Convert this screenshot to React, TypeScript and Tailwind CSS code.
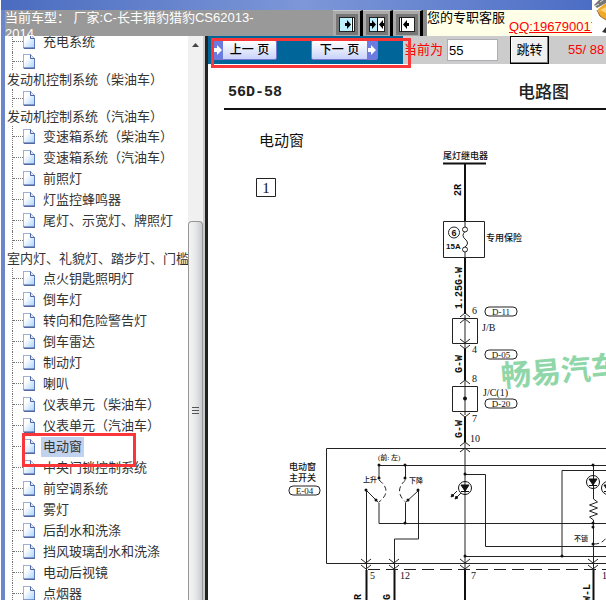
import React from "react";
import { clsx } from "clsx";

type Entry = { label?: string; wrapped?: string; selected?: boolean };

const ENTRIES: Entry[] = [
  { label: "充电系统" },
  { wrapped: "发动机控制系统（柴油车）" },
  { wrapped: "发动机控制系统（汽油车）" },
  { label: "变速箱系统（柴油车）" },
  { label: "变速箱系统（汽油车）" },
  { label: "前照灯" },
  { label: "灯监控蜂鸣器" },
  { label: "尾灯、示宽灯、牌照灯" },
  { wrapped: "室内灯、礼貌灯、踏步灯、门槛灯" },
  { label: "点火钥匙照明灯" },
  { label: "倒车灯" },
  { label: "转向和危险警告灯" },
  { label: "倒车雷达" },
  { label: "制动灯" },
  { label: "喇叭" },
  { label: "仪表单元（柴油车）" },
  { label: "仪表单元（汽油车）" },
  { label: "电动窗", selected: true },
  { label: "中央门锁控制系统" },
  { label: "前空调系统" },
  { label: "雾灯" },
  { label: "后刮水和洗涤" },
  { label: "挡风玻璃刮水和洗涤" },
  { label: "电动后视镜" },
  { label: "点烟器" },
];

/* --------------------------------------------------------------- Sidebar */
function PageIcon() {
  return (
    <svg viewBox="0 0 12 15" className="h-[15px] w-3 shrink-0">
      <defs>
        <linearGradient id="sheet" x1="0" y1="0" x2="1" y2="1">
          <stop offset="0.3" stopColor="#fff" />
          <stop offset="1" stopColor="#a9d2fb" />
        </linearGradient>
      </defs>
      <path d="M.5.5h7l4 4v9.500H.5z" fill="url(#sheet)" stroke="#5f79bd" />
      <path d="M.5 13.500V.5h7" fill="none" stroke="#9fb0d8" />
      <path d="M7.500.5v4h4" fill="#e4edfb" stroke="#4d64a4" />
      <path d="M1 14.300h11" stroke="#3f5490" strokeWidth="1" />
    </svg>
  );
}

function Branch() {
  return (
    <span className="flex h-full items-center">
      <span className="h-full border-l border-dotted border-[#777]" />
      <span className="w-[10px] border-t border-dotted border-[#777]" />
      <PageIcon />
    </span>
  );
}

function TreeEntry({ label, wrapped, selected }: Entry) {
  if (wrapped) {
    return (
      <li>
        <div className="h-[18px] pl-[7px]">
          <Branch />
        </div>
        <a href="#" className="block h-[19px] pl-[2px] leading-[20px] whitespace-nowrap">
          {wrapped}
        </a>
      </li>
    );
  }
  return (
    <li className="flex h-[21px] items-center pl-[7px]">
      <Branch />
      <a
        href="#"
        className={clsx("ml-[6px] px-[2px] leading-[20px] whitespace-nowrap", selected && "bg-[#c1d2ee]")}
      >
        {label}
      </a>
    </li>
  );
}

function ScrollBar() {
  return (
    <div className="flex w-[15px] shrink-0 flex-col bg-[#f0f0f0]">
      <div className="flex h-[185px] shrink-0 justify-center pt-[7px]">
        <svg viewBox="0 0 7 4" className="h-1 w-[7px]">
          <path d="M0 4L3.500 0L7 4z" fill="#444" />
        </svg>
      </div>
      <div className="flex grow items-center justify-center rounded-t-sm border border-b-0 border-[#979797] bg-linear-to-r from-[#f5f5f5] via-[#e6e7e9] to-[#c9cbcf]">
        <svg viewBox="0 0 7 8" className="h-2 w-[7px]">
          <path d="M0 .5h7M0 3.500h7M0 6.500h7" stroke="#555" />
        </svg>
      </div>
    </div>
  );
}

function Sidebar() {
  return (
    <nav className="relative flex w-[198px] shrink-0">
      <div className="min-w-0 grow overflow-hidden bg-white text-[13px] text-[#333]">
        <ul className="-mt-[5px]">
          {ENTRIES.map((e) => (
            <TreeEntry key={e.label ?? e.wrapped} {...e} />
          ))}
        </ul>
      </div>
      <ScrollBar />
      <div className="absolute top-[397px] left-[17px] h-[34px] w-[114px] border-3 border-[#fb3639]" />
    </nav>
  );
}

/* ---------------------------------------------------------------- Header */
function PaneButton({ label, children }: { label: string; children: React.ReactNode }) {
  return (
    <button
      aria-label={label}
      className="flex h-[26px] w-[30px] items-center justify-center border-t border-r-3 border-t-[#c8c8c8] border-r-black bg-[#aaa]"
    >
      <svg viewBox="0 0 22 22" className="h-[22px] w-[22px]">
        <rect x="1.500" y="2.500" width="19" height="18" fill="#fff" stroke="#777" strokeWidth="3" />
        <rect x="3.500" y="4.500" width="15" height="14" fill="none" stroke="#222" />
        {children}
      </svg>
    </button>
  );
}

function TopBar() {
  return (
    <header className="flex h-[26px] shrink-0 overflow-hidden">
      <div className="flex min-w-0 grow bg-[#999]">
        <p className="w-[270px] text-[13px] leading-4 text-white">当前车型： 厂家:C-长丰猎豹猎豹CS62013-2014</p>
      </div>
      <div className="flex shrink-0 bg-[#888] pr-1">
        <PaneButton label="展开目录">
          <path d="M4 5h11v13H4z" fill="#bdf0ff" />
          <path d="M16.500 4v15" stroke="#111" />
          <path d="M9 10h2V7l4 4.500-4 4.500v-3H9z" fill="#000" />
        </PaneButton>
        <PaneButton label="平分窗口">
          <path d="M4 5h7v13H4z" fill="#bdf0ff" />
          <path d="M11.500 4v15" stroke="#111" />
          <path d="M4 10h2V7l4 4.500-4 4.500v-3H4zM18 10h-1V7l-4 4.500 4 4.500v-3h1z" fill="#000" />
        </PaneButton>
        <PaneButton label="收起目录">
          <path d="M5.500 4v15" stroke="#111" />
          <path d="M13 10h-2V7l-4 4.500 4 4.500v-3h2z" fill="#000" />
        </PaneButton>
      </div>
      <div className="flex w-[165px] shrink-0 overflow-hidden bg-[#ffffe8] text-[13px] whitespace-nowrap">
        <span className="leading-4 text-black">您的专职客服</span>
        <a href="#" className="ml-1 pt-[7px] leading-5 text-[#f00] underline">
          QQ:1967900172
        </a>
      </div>
      <div className="w-[14px] shrink-0 bg-white" />
    </header>
  );
}

function CornerBadge() {
  return (
    <svg viewBox="0 0 14 36" className="absolute top-0 right-0 h-9 w-[14px] bg-white">
      <path d="M2 5l5-5h7v3L5 8z" fill="#777" />
      <path d="M3 6l4-2M8 2l3-2" stroke="#ddd" />
      <path d="M6 9l8-6v17l-7-5z" fill="#f0a92b" />
      <path d="M8 10l6-3v6z" fill="#ffd574" />
      <path d="M5 10l3 6 6 4" stroke="#9a6718" fill="none" />
      <path d="M10 32l4-5v6z" fill="#333" />
    </svg>
  );
}

function PageToolbar() {
  return (
    <div className="relative flex h-7 shrink-0 bg-[#ccc]">
      <div className="flex w-[195px] shrink-0 items-start bg-[#069] pt-1">
        <button className="ml-1 flex h-5 w-[65px] items-center rounded-xs border border-[#7777d0] bg-linear-to-b from-white to-[#c9d3fa] text-[12px] font-medium text-black">
          <svg viewBox="0 0 10 18" className="h-[18px] w-[10px]">
            <path d="M0 0h10v18H0z" fill="#6b7be0" />
            <path d="M0 7h4V4l5 5-5 5v-3H0z" fill="#fff" />
          </svg>
          <span className="grow">上一 页</span>
        </button>
        <button className="ml-[34px] flex h-5 w-[67px] items-center rounded-xs border border-[#7777d0] bg-linear-to-b from-white to-[#c9d3fa] text-[12px] font-medium text-black">
          <span className="grow">下一 页</span>
          <svg viewBox="0 0 10 18" className="h-[18px] w-[10px]">
            <path d="M0 0h10v18H0z" fill="#6b7be0" />
            <path d="M1 7h3V4l5 5-5 5v-3H1z" fill="#fff" />
          </svg>
        </button>
      </div>
      <label className="flex items-center pl-px text-[13px] whitespace-nowrap text-[#f00]">
        当前为
        <input
          defaultValue="55"
          className="ml-1 h-[22px] w-[51px] border border-[#abadb3] bg-white px-px text-[13px] text-black"
        />
      </label>
      <button className="ml-3 h-7 w-[39px] shrink-0 border border-black bg-[#f0f0f0] text-[13px] text-black shadow-[inset_-1px_-1px_0_#777,inset_1px_1px_0_#fff]">
        跳转
      </button>
      <span className="ml-[19px] self-center text-[13px] whitespace-nowrap text-[#f00]">55/ 88</span>
      <div className="absolute top-[2px] left-[3px] h-[30px] w-[200px] border-3 border-[#fb3639]" />
    </div>
  );
}

/* --------------------------------------------------------------- Diagram */
function Connector({ x, y, w, name }: { x: number; y: number; w: number; name: string }) {
  return (
    <g>
      <rect x={x} y={y} width={w} height="9" rx="4" fill="none" stroke="#222" />
      <text x={x + w / 2} y={y + 8} textAnchor="middle">
        {name}
      </text>
    </g>
  );
}

function Lamp({ x, y }: { x: number; y: number }) {
  return (
    <g stroke="#111">
      <circle cx={x} cy={y} r="6.500" fill="none" />
      <path d={`M${x - 4} ${y - 3}h8l-4 6z`} fill="#111" />
      <path d={`M${x - 4} ${y + 3.5}h8`} />
    </g>
  );
}

const JUNCTIONS = [
  [379, 465], [405, 465], [379, 478], [405, 478], [366, 490], [418, 490], [376, 500], [408, 500],
  [405, 523], [465, 474], [465, 556], [562, 556], [593, 465], [593, 523], [593, 527], [593, 544],
];

function WiringDiagram() {
  return (
    <svg viewBox="208 110 398 490" className="h-[490px] w-[398px] shrink-0" aria-label="电动窗电路图">
      <g fill="none" stroke="#222">
        <path d="M256.500 178.500h19v18h-19z" />
        <path d="M443.500 221.500h41v36h-41z" />
        <path d="M452.500 318.500h25v25h-25zM452.500 386.500h25v25h-25z" />
        <path d="M465 315v34M465 381v34M465 443v145M465 474.500h20.500v72H606" />
        <path d="M606 448.500H326.500v115H606" />
        <path d="M379 465.500h227M379 465.500v13M405.500 465.500v13M379 503v20.500h227M405.500 503v20" />
        <path d="M366.500 490.500v98M366.500 490.500l12 12M418.500 490.500l-13 12M418.500 490.500v48.500h-24v49" />
        <path d="M465 556.500h141M562 556.500v-86h44" />
        <path d="M593.500 465v34l4 3-8 3 8 3-8 3 8 3-8 3 4 3v68" />
        <path d="M379 480q14 11 0 22M405.500 480q-12 11 0 22M594 544q8 0 12-6" strokeDasharray="5 3" />
        <path d="M368 569.500h238" strokeDasharray="12 6" />
        <path d="M460 317l5-4 5 4M460 323l5-4 5 4M460 339l5 4 5-4M460 345l5 4 5-4M460 384l5-4 5 4M460 413l5 4 5-4M460 446l5-4 5 4M460 452l5-4 5 4" />
        <path d="M361 559l5 4 5-4M361 565l5 4 5-4M389 559l5 4 5-4M389 565l5 4 5-4M460 559l5 4 5-4M460 565l5 4 5-4M588 559l5 4 5-4M588 565l5 4 5-4" />
        <path d="M465 222v5M465 231.500q-4 4 0 7.500q5 4 0 8M465 251v6" />
        <circle cx="465" cy="229.500" r="2.500" fill="#fff" />
        <circle cx="465" cy="249.500" r="2.500" fill="#fff" />
        <circle cx="454" cy="232.500" r="5.500" />
        <path d="M457 491l-6 6M461 493l-6 6" />
        <path d="M451 497l1-3 2 2zM455 499l1-3 2 2z" fill="#111" />
      </g>
      <g fill="none" stroke="#111" strokeWidth="2">
        <path d="M443 163.500h43M465 164v57M465 258v56M465 349v31M465 417v25" />
        <path d="M366.500 570v30M394.500 570v30M465 570v30M593.500 570v30" />
      </g>
      <g fill="#111">
        <circle cx="465" cy="398.500" r="2" />
        {JUNCTIONS.map(([x, y]) => (
          <circle key={`${x}-${y}`} cx={x} cy={y} r="1.500" />
        ))}
      </g>
      <Lamp x={465} y={488} />
      <Lamp x={593} y={482} />
      <Lamp x={608} y={488} />
      <g className="fill-[#111] font-['Liberation_Serif','Noto_Sans_CJK_SC',serif] text-[9px] font-medium">
        <text x="259" y="146" className="text-[15px] font-normal">电动窗</text>
        <text x="266" y="193" textAnchor="middle" className="text-[15px]">1</text>
        <text x="443" y="159">尾灯继电器</text>
        <text x="486" y="241">专用保险</text>
        <text x="454" y="236" textAnchor="middle" className="font-['Liberation_Sans',sans-serif] font-bold">6</text>
        <text x="446" y="249" className="font-['Liberation_Sans',sans-serif] font-bold text-[8px]">15A</text>
        <text x="472" y="314" className="text-[10px]">6</text>
        <text x="482" y="331" className="text-[10px]">J/B</text>
        <text x="472" y="353" className="text-[10px]">4</text>
        <text x="472" y="382" className="text-[10px]">8</text>
        <text x="483" y="396" className="text-[10px]">J/C(1)</text>
        <text x="472" y="422" className="text-[10px]">7</text>
        <text x="470" y="442" className="text-[10px]">10</text>
        <Connector x={485} y={307} w={32} name="D-11" />
        <Connector x={485} y={350} w={32} name="D-05" />
        <Connector x={485} y={399} w={32} name="D-20" />
        <Connector x={289} y={486} w={31} name="E-04" />
        <text x="289" y="470">电动窗</text>
        <text x="289" y="481">主开关</text>
        <text x="378" y="460" className="text-[7px]">(前: 左)</text>
        <text x="363" y="482" className="text-[7px]">上升</text>
        <text x="409" y="483" className="text-[7px]">下降</text>
        <text x="574" y="541" className="text-[7px]">不锁</text>
        <text x="370" y="579" className="text-[10px]">5</text>
        <text x="400" y="579" className="text-[10px]">12</text>
        <text x="471" y="579" className="text-[10px]">7</text>
        <text x="602" y="579" className="text-[10px]">11</text>
      </g>
      <g className="fill-[#111] font-['Liberation_Mono',monospace] text-[10px] font-bold">
        <text transform="translate(461 196) rotate(-90)">2R</text>
        <text transform="translate(462 309) rotate(-90)">1.25G-W</text>
        <text transform="translate(462 373) rotate(-90)">G-W</text>
        <text transform="translate(462 438) rotate(-90)">G-W</text>
        <text transform="translate(361 600) rotate(-90)">R</text>
        <text transform="translate(390 600) rotate(-90)">G</text>
        <text transform="translate(590 602) rotate(-90)">W-L</text>
      </g>
      <text
        transform="translate(502 387) rotate(-5)"
        className="fill-[#8fd6a8] font-['Noto_Sans_CJK_SC',sans-serif] text-[30px] font-bold"
      >
        畅易汽车
      </text>
    </svg>
  );
}

function Manual() {
  return (
    <main className="flex min-w-0 grow flex-col overflow-hidden bg-white">
      <PageToolbar />
      <div className="ml-4 flex h-[46px] shrink-0 items-end justify-between border-b-2 border-[#111] pr-[37px] pb-[5px] pl-1 text-[#222]">
        <h1 className="font-['Liberation_Mono',monospace] text-[15px] leading-5 font-bold">56D-58</h1>
        <h2 className="text-[17px] leading-5 font-medium">电路图</h2>
      </div>
      <WiringDiagram />
    </main>
  );
}

export default function App() {
  return (
    <div className="relative flex h-screen flex-col overflow-hidden border-l border-white bg-[#6b86cb] font-['Liberation_Sans','Noto_Sans_CJK_SC',sans-serif]">
      <div className="flex h-[10px] shrink-0 bg-linear-to-r from-[#4a6bbf] via-[#7d97d8] to-[#4a6bc4]" />
      <div className="flex min-h-0 grow flex-col pl-1">
        <TopBar />
        <div className="flex min-h-0 grow">
          <Sidebar />
          <div className="w-[5px] shrink-0 border-r-3 border-[#222] bg-[#ccc]" />
          <Manual />
        </div>
      </div>
      <CornerBadge />
    </div>
  );
}
